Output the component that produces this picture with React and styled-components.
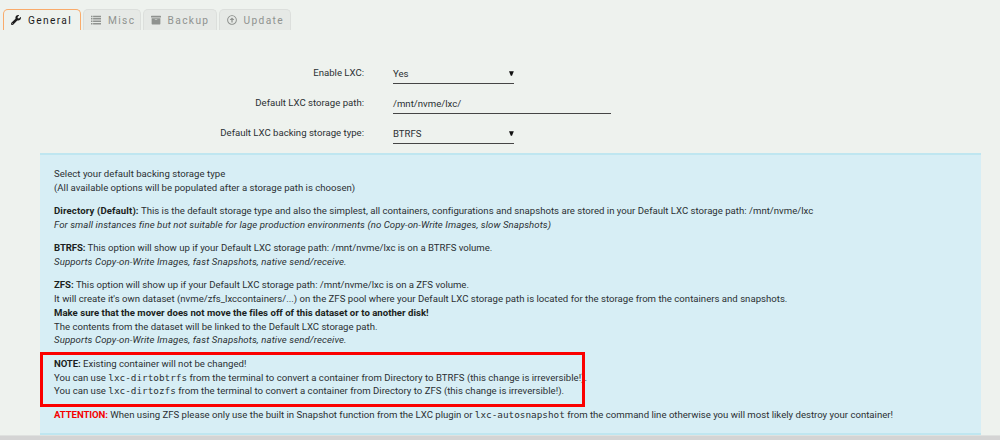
import React from 'react';
import styled, { createGlobalStyle } from 'styled-components';
import { FaWrench, FaArchive, FaRegArrowAltCircleUp } from 'react-icons/fa';

const GlobalStyle = createGlobalStyle`
  body {
    margin: 0;
    background: #eef2ee;
    overflow: hidden;
  }
`;

const Page = styled.div`
  display: flex;
  flex-direction: column;
  height: 440px;
  box-sizing: border-box;
  color: #2b3033;
  font-family: Roboto, "Liberation Sans", sans-serif;
  font-size: 9.6px;
`;

const Tabs = styled.nav`
  display: flex;
  gap: 2px;
  height: 21px;
  padding: 9px 0 0 3px;
`;

const Tab = styled.div`
  display: flex;
  align-items: center;
  box-sizing: border-box;
  width: ${({ $width }) => $width}px;
  padding-left: 7px;
  border: 1px solid ${({ $active }) => ($active ? '#f9ab6b' : '#dcdfdc')};
  border-bottom: none;
  border-radius: 5px 5px 0 0;
  background: ${({ $active }) => ($active ? 'transparent' : '#e6e9e6')};
  color: ${({ $active }) => ($active ? '#1c1c1c' : '#8f928f')};
  font-size: 10.2px;
  letter-spacing: 1.35px;
  svg {
    flex: none;
    width: 10px;
    height: 10px;
    margin-right: 7px;
  }
`;

const Form = styled.div`
  display: grid;
  grid-template-columns: 364px 1fr;
  grid-auto-rows: 30px;
  column-gap: 29px;
  height: 95px;
  padding-top: 28px;
`;

const Label = styled.label`
  padding-top: 9px;
  line-height: 12px;
  text-align: right;
`;

const Field = styled.div`
  display: flex;
  justify-content: space-between;
  box-sizing: border-box;
  width: ${({ $width }) => $width}px;
  height: 26px;
  padding-top: 9px;
  border-bottom: 1px solid #454545;
  line-height: 13px;
`;

const Arrow = styled.svg`
  width: 5px;
  height: 5px;
  margin-top: 4px;
`;

const Help = styled.section`
  box-sizing: border-box;
  height: 282px;
  margin: 0 19.5px 0 40px;
  padding: 12px 14px 0;
  border-top: 2px solid #bfe6f0;
  border-bottom: 2px solid #bfe6f0;
  background: #d7eef5;
  line-height: 13.83px;
  white-space: nowrap;
`;

const Paragraph = styled.p`
  margin: 0 0 9.4px;
`;

const Line = styled.div`
  letter-spacing: ${({ $track = 0 }) => $track}px;
`;

const Strong = styled.strong`
  letter-spacing: ${({ $track = 0 }) => $track}px;
  color: ${({ $alert }) => ($alert ? '#f50000' : '#1b1f21')};
`;

const Hint = styled.em`
  letter-spacing: ${({ $track = 0.11 }) => $track}px;
`;

const Code = styled.code`
  font-family: "DejaVu Sans Mono", monospace;
  font-size: 9.35px;
  line-height: 1;
  letter-spacing: 0;
`;

const Marked = styled(Paragraph)`
  position: relative;
  &::after {
    content: '';
    position: absolute;
    top: -5px;
    left: -14px;
    width: 539px;
    height: 49px;
    border: 3px solid #fb0000;
  }
`;

const Footer = styled.footer`
  height: 4px;
  margin-top: auto;
  border-top: 1px solid #dfe1df;
  background: #d4d4d4;
`;

const ListIcon = () => (
  <svg viewBox="0 0 10 10" fill="currentColor">
    <path d="M0 .7h1.5v1.5H0zM0 3.1h1.5v1.5H0zM0 5.5h1.5V7H0zM0 7.9h1.5v1.5H0zM2.1.7H10v1.5H2.1zM2.1 3.1H10v1.5H2.1zM2.1 5.5H10V7H2.1zM2.1 7.9H10v1.5H2.1z" />
  </svg>
);

const tabs = [
  { name: 'General', icon: FaWrench, width: 78, active: true },
  { name: 'Misc', icon: ListIcon, width: 57.6 },
  { name: 'Backup', icon: FaArchive, width: 74 },
  { name: 'Update', icon: FaRegArrowAltCircleUp, width: 72.6 },
];

const DropArrow = () => (
  <Arrow viewBox="0 0 5 5">
    <path d="M0 0.3H4.8L3 4.8H1.8Z" fill="#111" />
  </Arrow>
);

const App = () => (
  <Page>
    <GlobalStyle />
    <Tabs>
      {tabs.map(({ name, icon: Icon, width, active }) => (
        <Tab key={name} $width={width} $active={active}>
          <Icon />
          {name}
        </Tab>
      ))}
    </Tabs>
    <Form>
      <Label>Enable LXC:</Label>
      <Field $width={121}>
        Yes
        <DropArrow />
      </Field>
      <Label>Default LXC storage path:</Label>
      <Field $width={218}>/mnt/nvme/lxc/</Field>
      <Label>Default LXC backing storage type:</Label>
      <Field $width={121}>
        BTRFS
        <DropArrow />
      </Field>
    </Form>
    <Help>
      <Paragraph>
        <Line $track={0.02}>Select your default backing storage type</Line>
        <Line>(All available options will be populated after a storage path is choosen)</Line>
      </Paragraph>
      <Paragraph>
        <Line $track={0.006}>
          <Strong $track={0.12}>Directory (Default):</Strong>
          {' This is the default storage type and also the simplest, all containers, configurations and snapshots are stored in your Default LXC storage path: /mnt/nvme/lxc'}
        </Line>
        <Line><Hint $track={0.08}>For small instances fine but not suitable for lage production environments (no Copy-on-Write Images, slow Snapshots)</Hint></Line>
      </Paragraph>
      <Paragraph>
        <Line $track={-0.02}>
          <Strong $track={-0.1}>BTRFS:</Strong>
          {' This option will show up if your Default LXC storage path: /mnt/nvme/lxc is on a BTRFS volume.'}
        </Line>
        <Line><Hint>Supports Copy-on-Write Images, fast Snapshots, native send/receive.</Hint></Line>
      </Paragraph>
      <Paragraph>
        <Line $track={-0.02}>
          <Strong>ZFS:</Strong>
          {' This option will show up if your Default LXC storage path: /mnt/nvme/lxc is on a ZFS volume.'}
        </Line>
        <Line $track={0.005}>It will create it&apos;s own dataset (nvme/zfs_lxccontainers/...) on the ZFS pool where your Default LXC storage path is located for the storage from the containers and snapshots.</Line>
        <Line><Strong $track={0.02}>Make sure that the mover does not move the files off of this dataset or to another disk!</Strong></Line>
        <Line $track={-0.01}>The contents from the dataset will be linked to the Default LXC storage path.</Line>
        <Line><Hint>Supports Copy-on-Write Images, fast Snapshots, native send/receive.</Hint></Line>
      </Paragraph>
      <Marked>
        <Line>
          <Strong $track={-0.1}>NOTE:</Strong>
          {' Existing container will not be changed!'}
        </Line>
        <Line $track={0.01}>
          {'You can use '}
          <Code>lxc-dirtobtrfs</Code>
          {' from the terminal to convert a container from Directory to BTRFS (this change is irreversible!).'}
        </Line>
        <Line $track={0.01}>
          {'You can use '}
          <Code>lxc-dirtozfs</Code>
          {' from the terminal to convert a container from Directory to ZFS (this change is irreversible!).'}
        </Line>
      </Marked>
      <Paragraph>
        <Line>
          <Strong $track={-0.08} $alert>ATTENTION:</Strong>
          {' When using ZFS please only use the built in Snapshot function from the LXC plugin or '}
          <Code>lxc-autosnapshot</Code>
          {' from the command line otherwise you will most likely destroy your container!'}
        </Line>
      </Paragraph>
    </Help>
    <Footer />
  </Page>
);

export default App;
